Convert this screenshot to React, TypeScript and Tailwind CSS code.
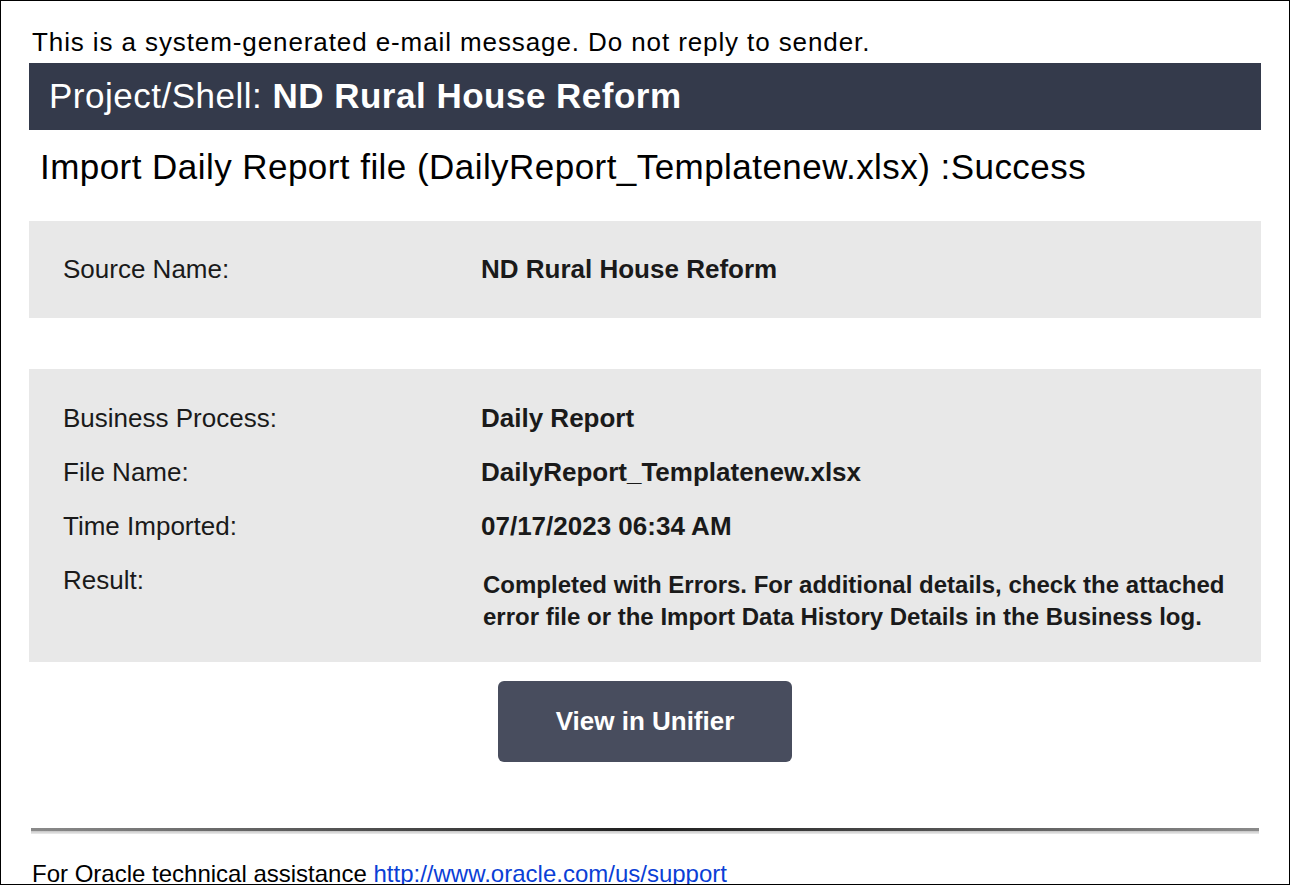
import React from 'react'

const DETAILS = [
  { label: 'Business Process:', value: 'Daily Report' },
  { label: 'File Name:', value: 'DailyReport_Templatenew.xlsx' },
  { label: 'Time Imported:', value: '07/17/2023 06:34 AM' },
]

export default function App() {
  return (
    <div
      className="w-[1290px] h-[885px] overflow-hidden bg-white border border-black text-[#1a1a1a]"
      style={{ fontFamily: '"Liberation Sans", Arial, Helvetica, sans-serif' }}
    >
      <div className="mt-[27px] ml-[31px] h-[28px] text-[26px] leading-[28px] tracking-[0.9px] text-black whitespace-nowrap">
        This is a system-generated e-mail message. Do not reply to sender.
      </div>

      <div className="mt-[7px] mx-[28px] h-[67px] bg-[#343a4b] flex items-center pl-[20px] text-white text-[35px] tracking-[0.5px] whitespace-nowrap">
        Project/Shell:&nbsp;<span className="font-bold">ND Rural House Reform</span>
      </div>

      <div className="mt-[17px] ml-[39px] h-[40px] flex items-center text-[35px] tracking-[0.45px] text-black whitespace-nowrap">
        Import Daily Report file (DailyReport_Templatenew.xlsx) :Success
      </div>

      <div className="mt-[34px] mx-[28px] h-[97px] bg-[#e8e8e8] flex items-center pl-[34px] text-[26px]">
        <div className="w-[418px]">Source Name:</div>
        <div className="font-bold">ND Rural House Reform</div>
      </div>

      <div className="mt-[51px] mx-[28px] h-[293px] bg-[#e8e8e8] pl-[34px] pt-[22px] text-[26px]">
        {DETAILS.map(d => (
          <div key={d.label} className="h-[54px] flex items-center">
            <div className="w-[418px]">{d.label}</div>
            <div className="font-bold">{d.value}</div>
          </div>
        ))}
        <div className="flex items-start">
          <div className="w-[418px] leading-[54px]">Result:</div>
          <div className="mt-[16px] ml-[2px] font-bold text-[24px] leading-[32px] w-[770px]">
            Completed with Errors. For additional details, check the attached error file or the Import Data History Details in the Business log.
          </div>
        </div>
      </div>

      <div className="mt-[19px] flex justify-center">
        <button className="w-[294px] h-[81px] rounded-[6px] bg-[#484d5e] text-white font-bold text-[26px]">
          View in Unifier
        </button>
      </div>

      <div className="mt-[66px] mx-[30px] h-[6px] flex flex-col">
        <div className="h-[3px] bg-[linear-gradient(to_right,#8a8a8a,#1e1e1e_50%,#8a8a8a)]" />
        <div className="h-[3px] bg-[linear-gradient(to_bottom,#c4c4c4,#ececec)]" />
      </div>

      <div className="mt-[27px] ml-[31px] text-[24px] leading-[26px] text-black whitespace-nowrap">
        For Oracle technical assistance{' '}
        <a href="#" className="text-[#0b3fd6] underline">http://www.oracle.com/us/support</a>
      </div>
    </div>
  )
}
